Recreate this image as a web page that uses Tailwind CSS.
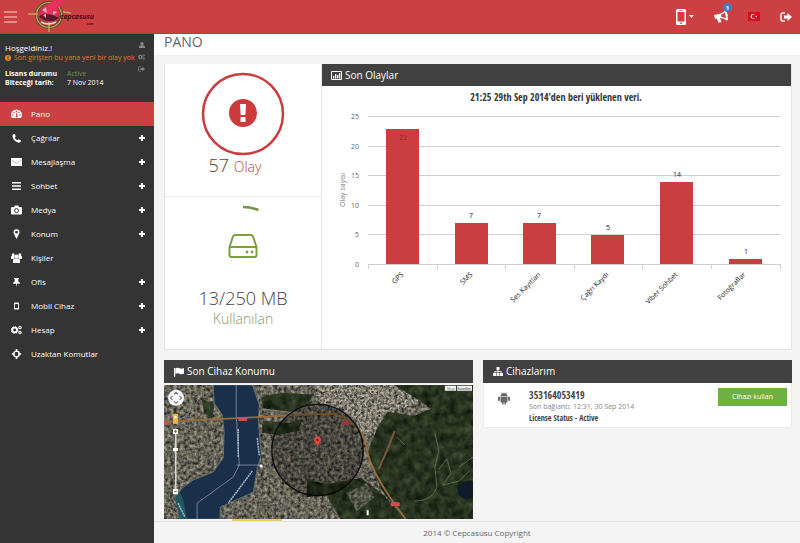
<!DOCTYPE html>
<html lang="tr">
<head>
    <meta charset="UTF-8">
    <meta name="viewport" content="width=device-width, initial-scale=1.0">
    <title>Cepcasusu - Pano</title>
    <script src="https://cdn.jsdelivr.net/npm/@tailwindcss/browser@4"></script>
</head>
<body class="flex min-h-screen flex-col bg-[#f4f4f4] font-['Open_Sans','Noto_Sans',sans-serif] text-[#555]">

    <!-- Icons -->
    <svg class="hidden" aria-hidden="true">
        <symbol id="plus" viewBox="0 0 6 6"><path d="M2 0h2v2h2v2H4v2H2V4H0V2h2z"/></symbol>
        <symbol id="cogs" viewBox="0 0 12 10">
            <circle cx="4" cy="5" r="2.6" fill="none" stroke="currentColor" stroke-width="2"/>
            <circle cx="4" cy="5" r="3.7" fill="none" stroke="currentColor" stroke-width="1" stroke-dasharray="1.5 1.4"/>
            <circle cx="9.8" cy="2.2" r="1.3" fill="none" stroke="currentColor" stroke-width="1.2"/>
            <circle cx="9.8" cy="7.8" r="1.3" fill="none" stroke="currentColor" stroke-width="1.2"/>
        </symbol>
        <symbol id="logout" viewBox="0 0 12 10">
            <path d="M5 1H2.5Q1 1 1 2.500v5Q1 9 2.500 9H5" fill="none" stroke="currentColor" stroke-width="1.4"/>
            <path d="M4 3.500h3.500V1L12 5 7.500 9V6.500H4z"/>
        </symbol>
    </svg>

    <!-- Header -->
    <header class="flex h-[34px] shrink-0 items-center justify-between border-b border-[#b23a3e] bg-[#cc4042] pr-2 pl-1 text-white">
        <div class="flex items-center gap-2">
            <button type="button" aria-label="Menü" class="flex w-[13px] flex-col gap-[3px]">
                <span class="h-[2px] w-full bg-[#e58a8a]"></span>
                <span class="h-[2px] w-full bg-[#e58a8a]"></span>
                <span class="h-[2px] w-full bg-[#e58a8a]"></span>
            </button>
            <a href="#" aria-label="Cepcasusu">
                <svg class="h-[33px] w-[76px]" viewBox="0 0 76 33">
                    <circle cx="24" cy="15" r="12.500" fill="#c3364c" stroke="#5d4f2a" stroke-width="3"/>
                    <circle cx="24" cy="15" r="12.500" fill="none" stroke="#b9a85c" stroke-width="1.200"/>
                    <path d="M3 14h10M24 22v10M38 12l8 1" stroke="#b9a85c" stroke-width="1.500"/>
                    <path d="M15 13l6-2 2-7 7-4h8l-3 6-4 2 4 5-6 4-6-2-6 4z" fill="#e8305c"/>
                    <path d="M14 17q3-4 8-3l6 1 6 3-5 3h-8z" fill="#5c1a30"/>
                    <path d="M17 10l4-3 1 6zM28 11l4 1-4 3zM18 15l3-1v4z" fill="#f3a7b6"/>
                    <path d="M16 22q7 4 15 0" fill="none" stroke="#dfe3c4" stroke-width="1.500"/>
                    <text x="35" y="19" font-size="7" font-weight="700" font-style="italic" fill="#3a1216">cepcasusu</text>
                    <text x="61" y="25" font-size="3" font-weight="700" fill="#3a1216">.com</text>
                </svg>
            </a>
        </div>
        <nav class="flex items-center gap-5">
            <button type="button" aria-label="Cihaz seç" class="flex items-center gap-[3px]">
                <svg class="h-4 w-[10px]" viewBox="0 0 10 16"><path fill="#fff" fill-rule="evenodd" d="M1.500 0h7Q10 0 10 1.500v13Q10 16 8.500 16h-7Q0 16 0 14.500v-13Q0 0 1.500 0zM1.500 3v9.500h7V3zM3.500 1v.8h3V1zM5 13.300a.9.9 0 100 1.800.9.9 0 000-1.800z"/></svg>
                <svg class="h-[3px] w-[5px]" viewBox="0 0 5 3"><path fill="#fff" d="M0 0h5L2.500 3z"/></svg>
            </button>
            <button type="button" aria-label="Duyurular" class="relative">
                <svg class="h-[13px] w-[14px]" viewBox="0 0 14 13">
                    <path fill="#fff" fill-rule="evenodd" d="M0 5l5-1Q9 3 11.500 0l1 .3.800 3.700.7 1-.4 1 .4 4-1.200.5Q9 7.500 6 8l1.500 4-3 .8L2.800 8.500 1 9zM7 4.800l.5 2.200q2.500 0 4.500 1.500l-1-6Q9.500 4 7 4.800z"/>
                </svg>
                <span class="absolute -top-[7px] -right-1 flex size-[9px] items-center justify-center rounded-full bg-[#3f7fc0] text-[6px] leading-none font-bold">1</span>
            </button>
            <button type="button" aria-label="Türkçe">
                <svg class="h-[9px] w-3" viewBox="0 0 12 9"><path fill="#dc0a17" d="M0 0h12v9H0z"/><circle cx="5" cy="4.500" r="2.400" fill="#fff"/><circle cx="5.700" cy="4.500" r="1.900" fill="#dc0a17"/><path fill="#fff" d="M7 4.500l2-.8v1.700z"/></svg>
            </button>
            <a href="#" aria-label="Çıkış"><svg class="h-[10px] w-3 fill-white text-white"><use href="#logout"/></svg></a>
        </nav>
    </header>

    <div class="flex flex-1">

        <!-- Sidebar -->
        <aside class="w-[154px] shrink-0 bg-[#343434] text-white">
            <div class="relative h-[68px] pt-2 pl-[5px] whitespace-nowrap">
                <p class="text-[8px] leading-[11px]">Hoşgeldiniz.!</p>
                <p class="flex items-center gap-[3px] text-[7px] leading-[10px] text-[#e27a2b]">
                    <svg class="size-[6px]" viewBox="0 0 6 6"><circle cx="3" cy="3" r="3" fill="#f08a24"/><path d="M2.500 1h1v2.500h-1zM2.500 4h1v1h-1z" fill="#343434"/></svg>
                    Son girişten bu yana yeni bir olay yok
                </p>
                <dl class="mt-[6px] grid grid-cols-[62px_1fr] text-[7px] leading-[9px]">
                    <dt class="font-bold">Lisans durumu</dt><dd class="text-[#6f8f4c]">Active</dd>
                    <dt class="font-bold">Biteceği tarih:</dt><dd>7 Nov 2014</dd>
                </dl>
                <div class="absolute top-2 right-[9px] flex flex-col items-center gap-[6px] text-[#888]">
                    <a href="#" aria-label="Profil"><svg class="block size-[6px] fill-current" viewBox="0 0 6 6"><circle cx="3" cy="1.700" r="1.700"/><path d="M0 6V5q0-1.700 3-1.700T6 5v1z"/></svg></a>
                    <a href="#" aria-label="Ayarlar"><svg class="block h-[6px] w-[7px] fill-current"><use href="#cogs"/></svg></a>
                    <a href="#" aria-label="Çıkış"><svg class="block h-[6px] w-[7px] fill-current"><use href="#logout"/></svg></a>
                </div>
            </div>
            <nav class="text-[8px] leading-6">
                <a href="#" class="flex h-6 items-center bg-[#cc4042] pr-[9px] pl-[11px]">
                    <svg class="mr-[9px] h-[10px] w-[11px]" viewBox="0 0 11 10"><path fill="#fff" d="M1 9Q0 7.500 0 6a5.500 5.500 0 0111 0q0 1.500-1 3z"/><g fill="#cc4042"><circle cx="1.900" cy="6" r=".7"/><circle cx="3" cy="3.400" r=".7"/><circle cx="5.500" cy="2.300" r=".7"/><circle cx="8" cy="3.400" r=".7"/><circle cx="9.100" cy="6" r=".7"/><path d="M5.500 3.500h.7L6.300 6.500a1.100 1.100 0 11-1.300 0z"/></g></svg>
                    <span class="flex-1">Pano</span>
                </a>
                <a href="#" class="flex h-6 items-center pr-[9px] pl-[11px]">
                    <svg class="mr-[9px] h-[10px] w-[11px]" viewBox="0 0 11 10"><path fill="#fff" d="M2 1.500L3.800 1l1 2.500-1.100 1q1 2 2.800 2.800l1.200-1L10 7.500 9.500 9Q8.500 10 7 9.500 2.500 8 1.500 3.500 1.400 2 2 1.500z"/></svg>
                    <span class="flex-1">Çağrılar</span><svg class="size-[6px] fill-white"><use href="#plus"/></svg>
                </a>
                <a href="#" class="flex h-6 items-center pr-[9px] pl-[11px]">
                    <svg class="mr-[9px] h-[10px] w-[11px]" viewBox="0 0 11 10"><path fill="#fff" d="M0 1h11v8H0z"/><path d="M0 2.500l5.500 4 5.500-4" fill="none" stroke="#aaa" stroke-width=".7"/></svg>
                    <span class="flex-1">Mesajlaşma</span><svg class="size-[6px] fill-white"><use href="#plus"/></svg>
                </a>
                <a href="#" class="flex h-6 items-center pr-[9px] pl-[11px]">
                    <svg class="mr-[9px] h-[10px] w-[11px]" viewBox="0 0 11 10"><path fill="#fff" d="M1 1h9v1.500H1zM1 4.300h9v1.500H1zM1 7.600h9v1.500H1z"/></svg>
                    <span class="flex-1">Sohbet</span><svg class="size-[6px] fill-white"><use href="#plus"/></svg>
                </a>
                <a href="#" class="flex h-6 items-center pr-[9px] pl-[11px]">
                    <svg class="mr-[9px] h-[10px] w-[11px]" viewBox="0 0 11 10"><path fill="#fff" d="M1 2h2l.8-1.500h3.400L8 2h2q1 0 1 1v5.500q0 1-1 1H1q-1 0-1-1V3q0-1 1-1z"/><circle cx="5.500" cy="5.600" r="2" fill="#fff" stroke="#343434" stroke-width="1"/></svg>
                    <span class="flex-1">Medya</span><svg class="size-[6px] fill-white"><use href="#plus"/></svg>
                </a>
                <a href="#" class="flex h-6 items-center pr-[9px] pl-[11px]">
                    <svg class="mr-[9px] h-[10px] w-[11px]" viewBox="0 0 11 10"><path fill="#fff" fill-rule="evenodd" d="M5.500 10L3 5Q2.500 4 2.500 3.200a3 3 0 016 0Q8.500 4 8 5zM5.500 1.800a1.400 1.400 0 100 2.800 1.400 1.400 0 000-2.800z"/></svg>
                    <span class="flex-1">Konum</span><svg class="size-[6px] fill-white"><use href="#plus"/></svg>
                </a>
                <a href="#" class="flex h-6 items-center pr-[9px] pl-[11px]">
                    <svg class="mr-[9px] h-[10px] w-[11px]" viewBox="0 0 11 10"><g fill="#fff"><circle cx="2.200" cy="1.700" r="1.500"/><circle cx="8.800" cy="1.700" r="1.500"/><circle cx="5.500" cy="3.500" r="2"/><path d="M0 6V4q0-1 1-1h2.500v2L2.500 6zM11 6V4q0-1-1-1H7.500v2L8.500 6zM2 10V7.500Q2 5.500 4 5.500h3q2 0 2 2V10z"/></g></svg>
                    <span class="flex-1">Kişiler</span>
                </a>
                <a href="#" class="flex h-6 items-center pr-[9px] pl-[11px]">
                    <svg class="mr-[9px] h-[10px] w-[11px]" viewBox="0 0 11 10"><path fill="#fff" d="M3 1h5v1H7.300v2.500Q9 5 9 6.800H6L5.500 10 5 6.800H2Q2 5 3.700 4.500V2H3z"/></svg>
                    <span class="flex-1">Ofis</span><svg class="size-[6px] fill-white"><use href="#plus"/></svg>
                </a>
                <a href="#" class="flex h-6 items-center pr-[9px] pl-[11px]">
                    <svg class="mr-[9px] h-[10px] w-[11px]" viewBox="0 0 11 10"><path fill="#fff" fill-rule="evenodd" d="M3.800 1.500h3.400q.8 0 .8.800v5.400q0 .8-.8.800H3.800Q3 8.500 3 7.700V2.300q0-.8.800-.8zM4 3v4h3V3z"/></svg>
                    <span class="flex-1">Mobil Cihaz</span><svg class="size-[6px] fill-white"><use href="#plus"/></svg>
                </a>
                <a href="#" class="flex h-6 items-center pr-[9px] pl-[11px]">
                    <svg class="mr-[9px] h-[10px] w-[11px]"><use href="#cogs"/></svg>
                    <span class="flex-1">Hesap</span><svg class="size-[6px] fill-white"><use href="#plus"/></svg>
                </a>
                <a href="#" class="flex h-6 items-center pr-[9px] pl-[11px]">
                    <svg class="mr-[9px] h-[10px] w-[11px]" viewBox="0 0 11 10"><circle cx="5.500" cy="5" r="2.800" fill="none" stroke="#fff" stroke-width="1.300"/><path fill="#fff" d="M4.700 0h1.600v3H4.700zM4.700 7h1.600v3H4.700zM.8 4.200h3v1.600h-3zM7.200 4.200h3v1.600h-3z"/></svg>
                    <span class="flex-1">Uzaktan Komutlar</span>
                </a>
            </nav>
        </aside>

        <div class="flex min-w-0 flex-1 flex-col">
            <h1 class="h-[22px] border-b border-[#eee] bg-white pl-[10px] text-[14px] leading-4 text-[#666]">PANO</h1>

            <main class="flex flex-1 flex-col gap-[10px] pt-2 pr-2 pl-[10px]">

                <!-- Stats and chart -->
                <section class="flex h-[286px] border border-t-0 border-[#e4e4e4] bg-white">
                    <div class="flex w-[157px] shrink-0 flex-col border-r border-[#e8e8e8] text-center font-light">
                        <div class="flex h-[133px] flex-col items-center border-b border-[#eee] pt-2">
                            <svg class="size-[84px]" viewBox="0 0 84 84">
                                <circle cx="42" cy="42" r="40" fill="none" stroke="#c93c41" stroke-width="2.500"/>
                                <circle cx="42" cy="41" r="14" fill="#cc3a3a"/>
                                <path fill="#fff" d="M39 32h6l-.6 11h-4.800zM39.500 45h5v5h-5z"/>
                            </svg>
                            <p class="mr-4 text-[18px] leading-[18px] text-[#444]">57 <span class="text-[14px] text-[#b0484c]">Olay</span></p>
                        </div>
                        <div class="flex flex-1 flex-col items-center pt-2">
                            <svg class="size-[84px]" viewBox="0 0 84 84">
                                <path d="M42 2q8 0 15.500 3" fill="none" stroke="#739440" stroke-width="2.500"/>
                                <g fill="none" stroke="#7d9f3c" stroke-width="2" stroke-linejoin="round">
                                    <path d="M34 30h16q1.500 0 2 1.500L55.500 42v8q0 2-2 2h-23q-2 0-2-2v-8L32 31.500Q32.500 30 34 30z"/>
                                    <path d="M28.500 42h27"/>
                                </g>
                                <circle cx="46" cy="47" r="1.400" fill="#7d9f3c"/>
                                <circle cx="51" cy="47" r="1.400" fill="#7d9f3c"/>
                            </svg>
                            <p class="text-[18px] leading-[18px] text-[#444]">13/250 MB</p>
                            <p class="text-[14px] leading-[24px] text-[#8a9a6c]">Kullanılan</p>
                        </div>
                    </div>
                    <div class="flex min-w-0 flex-1 flex-col">
                        <h2 class="flex h-[22px] shrink-0 items-center gap-[3px] bg-[#414141] pl-[9px] text-[10px] text-white">
                            <svg class="h-[9px] w-[11px]" viewBox="0 0 11 9"><path d="M.5.500h10v8H.5z" fill="none" stroke="#fff"/><path fill="#fff" d="M2 5h1.300v2.500H2zM4 3h1.300v4.500H4zM6 4h1.300v3.500H6zM8 2h1.300v5.500H8z"/></svg>
                            Son Olaylar
                        </h2>
                        <svg class="min-h-0 w-full flex-1" viewBox="0 -1 469 263" role="img" aria-label="Olay sayısı">
                            <text x="234" y="14" text-anchor="middle" font-size="10" font-weight="700" fill="#333" class="font-['Open_Sans_Condensed','Roboto_Condensed','Liberation_Sans_Narrow','Open_Sans',sans-serif]">21:25 29th Sep 2014'den beri yüklenen veri.</text>
                            <g stroke="#d0d0d0" stroke-width="1">
                                <path d="M46 29.500h412M46 59.500h412M46 88.500h412M46 118.500h412M46 147.500h412M46 177.500h412"/>
                                <path d="M46.500 177v5M115.500 177v5M183.500 177v5M252.500 177v5M320.500 177v5M389.500 177v5M458.500 177v5"/>
                            </g>
                            <g fill="#cb3e40">
                                <path d="M64 42h33v135H64zM133 136h33v41h-33zM201 136h33v41h-33zM269 148h33v29h-33zM338 95h33v82h-33zM407 172h33v5h-33z"/>
                            </g>
                            <g font-size="7" fill="#666" text-anchor="end">
                                <text x="37" y="32">25</text>
                                <text x="37" y="62">20</text>
                                <text x="37" y="91">15</text>
                                <text x="37" y="121">10</text>
                                <text x="37" y="150">5</text>
                                <text x="37" y="180">0</text>
                            </g>
                            <text transform="translate(23 103) rotate(-90)" font-size="7" fill="#777" text-anchor="middle">Olay sayısı</text>
                            <g font-size="7" fill="#222" text-anchor="middle">
                                <text x="81" y="53" fill="#8a2a2c">23</text>
                                <text x="149" y="131">7</text>
                                <text x="217" y="131">7</text>
                                <text x="286" y="143">5</text>
                                <text x="355" y="90">14</text>
                                <text x="424" y="167">1</text>
                            </g>
                            <g font-size="7" fill="#222" text-anchor="end">
                                <text transform="translate(82 188) rotate(-45)">GPS</text>
                                <text transform="translate(151 188) rotate(-45)">SMS</text>
                                <text transform="translate(219 188) rotate(-45)">Ses Kayıtları</text>
                                <text transform="translate(287 188) rotate(-45)">Çağrı Kaydı</text>
                                <text transform="translate(356 188) rotate(-45)">Viber Sohbet</text>
                                <text transform="translate(424 188) rotate(-45)">Fotoğraflar</text>
                            </g>
                        </svg>
                    </div>
                </section>

                <div class="grid flex-1 grid-cols-2 gap-[10px]">

                    <!-- Last location -->
                    <section>
                        <h2 class="flex h-[23px] items-center gap-[3px] bg-[#414141] pl-[10px] text-[10px] text-white">
                            <svg class="size-[10px]" viewBox="0 0 10 10"><path fill="#fff" d="M0 1h1.200v9H0zM1.500 1.500Q3.500 0 5.500 1.300 7.500 2.300 10 1v5.500Q7.500 8 5.500 6.800 3.500 5.500 1.500 7z"/></svg>
                            Son Cihaz Konumu
                        </h2>
                        <svg class="mt-[2px] h-[134px] w-full" viewBox="0 0 308 134" preserveAspectRatio="xMidYMid slice" role="img" aria-label="Harita">
                            <defs>
                                <filter id="urban" x="0" y="0" width="100%" height="100%" color-interpolation-filters="sRGB">
                                    <feTurbulence type="fractalNoise" baseFrequency=".3" numOctaves="3" seed="4"/>
                                    <feColorMatrix values=".85 0 0 0 -.03  .78 .05 0 0 -.03  .65 0 .1 0 -.03  0 0 0 0 1"/>
                                    <feComposite in2="SourceGraphic" operator="in"/>
                                </filter>
                                <filter id="woods" x="0" y="0" width="100%" height="100%" color-interpolation-filters="sRGB">
                                    <feTurbulence type="fractalNoise" baseFrequency=".12" numOctaves="3" seed="9"/>
                                    <feColorMatrix values=".3 0 0 0 0  .3 0 0 0 .05  .2 0 0 0 .02  0 0 0 0 1"/>
                                    <feComposite in2="SourceGraphic" operator="in"/>
                                </filter>
                                <filter id="specks" x="0" y="0" width="100%" height="100%" color-interpolation-filters="sRGB">
                                    <feTurbulence type="fractalNoise" baseFrequency=".4" numOctaves="2" seed="2"/>
                                    <feColorMatrix values="0 0 0 0 .72  0 0 0 0 .69  0 0 0 0 .65  4 0 0 0 -1.800"/>
                                    <feComposite in2="SourceGraphic" operator="in"/>
                                </filter>
                            </defs>
                            <path d="M0 0h308v134H0z" filter="url(#urban)"/>
                            <path d="M150 0h75l35 15-30 12-20 25-12-4-15-20-30-12z" filter="url(#specks)"/>
                            <g filter="url(#woods)">
                                <path d="M229 0h79v60l-16-12-20-20-20-14z"/>
                                <path d="M223 27l26 4 20-8 39 24v87h-67l-25-30-13-37 10-25z"/>
                                <path d="M143 95l20 4 33-6 20 14 25 27h-65l-14-24-20 2z"/>
                                <path d="M98 12l20-4 30 2-4 10-20 8-26-4zM98 36l28 2 12-4-4 12-20 4-16-2zM38 14l12 6-2 14-8-6z"/>
                            </g>
                            <path d="M182 108l20-10 8 14-18 14z" filter="url(#urban)" opacity=".7"/>
                            <!-- Strait -->
                            <path d="M49 0l1 18 8 12 2 17-1 26-10 14-20 8-11 8-7 10 5 21h40v-12l20-9 13-6 4-24 4-13-3-33 1-17-7-20z" fill="#1a2f4a" stroke="#6d7973" stroke-width=".8"/>
                            <path d="M11 113l4-7 4 8 4 20h-7z" fill="#245660"/>
                            <g fill="none" stroke="#a8b8c8" stroke-width=".6">
                                <path d="M72 0v30l3 50-6 12-36 26v16M72 80h25"/>
                                <path d="M74 44v28M93 53l2 18M88 86l-24 32M14 118l7 14" stroke-width="1.500" stroke-dasharray="2 .6"/>
                            </g>
                            <!-- Roads -->
                            <g fill="none">
                                <path d="M0 37l78-4 58-3 30-1q16 2 25 12 10 10 12 27 6 24 38 66" stroke="#9c6c38" stroke-width="1.700"/>
                                <path d="M98 24l40 5M26 4v14q2 12-10 16M215 0l-4 28-16 16" stroke="#968e74" stroke-width=".9"/>
                                <path d="M173 40l-6 10 6 18-16 20M157 88l20-22 20-4M203 50l20-24M100 50l20 24M106 84l22 30 30 14M112 100l40 34" stroke="#85805f" stroke-width=".8"/>
                                <path d="M230 46l-8 20-8 18" stroke="#7d5542" stroke-width="2"/>
                                <path d="M270 48l4 18-4 16 2 20q-4 14-22 14M274 84l8-10 4 14-8 12 16-4 10-10M240 60l-8-8M308 72l-14 10" stroke="#6f7355" stroke-width=".8"/>
                            </g>
                            <path d="M292 102q6-8 16-6v16q-8 4-14-2z" fill="#101b2a"/>
                            <g fill="#d94a55">
                                <rect x="74" y="32" width="9" height="4" rx="1"/><rect x="177" y="36" width="8" height="4" rx="1"/><rect x="226" y="117" width="9" height="4" rx="1"/><rect x="0" y="36" width="4" height="4" rx="1"/>
                            </g>
                            <circle cx="97" cy="81" r="1.500" fill="#fff"/>
                            <path d="M202 125h2v5h-2z" fill="#fff"/>
                            <!-- Accuracy circle and marker -->
                            <circle cx="153" cy="65" r="45.500" fill="#000" fill-opacity=".28" stroke="#080808" stroke-width="1.300"/>
                            <path d="M153 62q-.5-3-2-4.500a3.300 3.300 0 114 0Q153.500 59 153 62z" fill="#f2413b"/>
                            <circle cx="153" cy="55" r="1.100" fill="#6b1513"/>
                            <!-- Controls -->
                            <circle cx="12" cy="13" r="8" fill="#f7f7f7"/>
                            <path d="M10 9.500l2-2 2 2M10 16.500l2 2 2-2M8.500 11l-2 2 2 2M15.500 11l2 2-2 2" fill="none" stroke="#777" stroke-width="1.100"/>
                            <path d="M9 29h5v10H9z" fill="#e0b83a"/><circle cx="11.500" cy="32" r="1.500" fill="#fff3a0"/>
                            <path d="M11 49h1.500v56H11z" fill="#ddd"/>
                            <path d="M9 44h5v5H9zM9 63h5v3H9zM9 104h5v5H9z" fill="#fff"/>
                            <path d="M10 46.500h3M11.500 45v3M10 106.500h3" stroke="#555" stroke-width=".8"/>
                            <path d="M280 1h11v5h-11zM292 1h15v5h-15z" fill="#f8f8f8"/>
                            <text x="282" y="5" font-size="4" fill="#777" class="font-['Liberation_Sans',sans-serif]">Map</text>
                            <text x="292" y="5" font-size="4" fill="#333" class="font-['Liberation_Sans',sans-serif]">Satellite</text>
                        </svg>
                        <div class="ml-[68px] h-[2px] w-[50px] bg-[#e5cf6a]"></div>
                    </section>

                    <!-- Devices -->
                    <section>
                        <h2 class="flex h-[23px] items-center gap-[3px] bg-[#414141] pl-[10px] text-[10px] text-white">
                            <svg class="h-[9px] w-[10px]" viewBox="0 0 10 9"><path fill="#fff" d="M3.500 0h3v3h-1v1h3v2H10v3H7V6h.7V4.800H5.500V6h1v3h-3V6h1V4.800H2.300V6H3v3H0V6h1.500V4h3V3h-1z"/></svg>
                            Cihazlarım
                        </h2>
                        <div class="flex h-[45px] items-start border border-t-0 border-[#ececec] bg-white pt-[5px] pr-1 pl-[14px]">
                            <svg class="mt-1 mr-[19px] h-[13px] w-3" viewBox="0 0 12 13"><g fill="#666"><path d="M2.500 4.300q0-3 3.500-3.300 3.500.3 3.500 3.300z"/><path d="M2.500 4.800h7v5q0 .7-.7.700H8v2H6.500v-2h-1v2H4v-2h-.8q-.7 0-.7-.7z"/><rect y="4.500" width="1.900" height="4.500" rx=".9"/><rect x="10.100" y="4.500" width="1.900" height="4.500" rx=".9"/></g><path d="M4 1.500L3.300.300M8 1.500L8.700.300" stroke="#666" stroke-width=".5"/></svg>
                            <div class="flex-1">
                                <p class="font-['Open_Sans_Condensed','Roboto_Condensed','Liberation_Sans_Narrow','Open_Sans',sans-serif] text-[10px] leading-[14px] font-bold text-[#444]">353164053419</p>
                                <p class="text-[7px] leading-[10px] text-[#888]">Son bağlantı: 12:31, 30 Sep 2014</p>
                                <p class="font-['Open_Sans_Condensed','Roboto_Condensed','Liberation_Sans_Narrow','Open_Sans',sans-serif] text-[8px] leading-[11px] font-bold text-[#444]">License Status - Active</p>
                            </div>
                            <button type="button" class="h-[18px] w-[69px] bg-[#6fb043] text-[7px] text-white">Cihazı kullan</button>
                        </div>
                    </section>
                </div>
            </main>

            <footer class="h-[22px] border-t border-[#e2e2e2] text-center text-[8px] leading-[22px] text-[#666]">2014 © Cepcasusu Copyright</footer>
        </div>
    </div>
</body>
</html>
